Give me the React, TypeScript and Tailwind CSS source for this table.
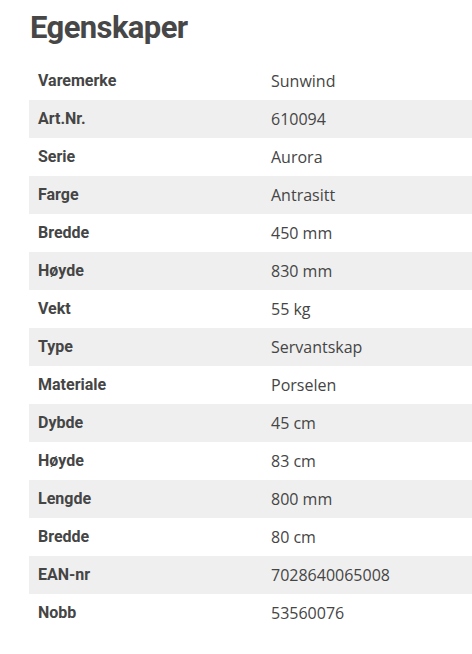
const rows: [string, string][] = [
  ['Varemerke', 'Sunwind'],
  ['Art.Nr.', '610094'],
  ['Serie', 'Aurora'],
  ['Farge', 'Antrasitt'],
  ['Bredde', '450 mm'],
  ['Høyde', '830 mm'],
  ['Vekt', '55 kg'],
  ['Type', 'Servantskap'],
  ['Materiale', 'Porselen'],
  ['Dybde', '45 cm'],
  ['Høyde', '83 cm'],
  ['Lengde', '800 mm'],
  ['Bredde', '80 cm'],
  ['EAN-nr', '7028640065008'],
  ['Nobb', '53560076'],
];

export default function App() {
  return (
    <div className="min-h-screen bg-white pl-[29px] pt-[9px] text-[#454545] font-['Roboto',sans-serif]">
      <h2 className="text-[31px] leading-[38px] font-bold tracking-[-0.6px] pl-px mb-[15px] text-[#474747]">Egenskaper</h2>
      <div>
        {rows.map(([label, value], i) => (
          <div
            key={i}
            className={`grid grid-cols-[242px_1fr] h-[38px] items-center text-[16px] ${i % 2 === 1 ? 'bg-[#efefef]' : 'bg-white'}`}
          >
            <span className="pl-[9px] font-bold">{label}</span>
            <span className="font-['Open_Sans',sans-serif] text-[16px]">{value}</span>
          </div>
        ))}
      </div>
    </div>
  );
}
